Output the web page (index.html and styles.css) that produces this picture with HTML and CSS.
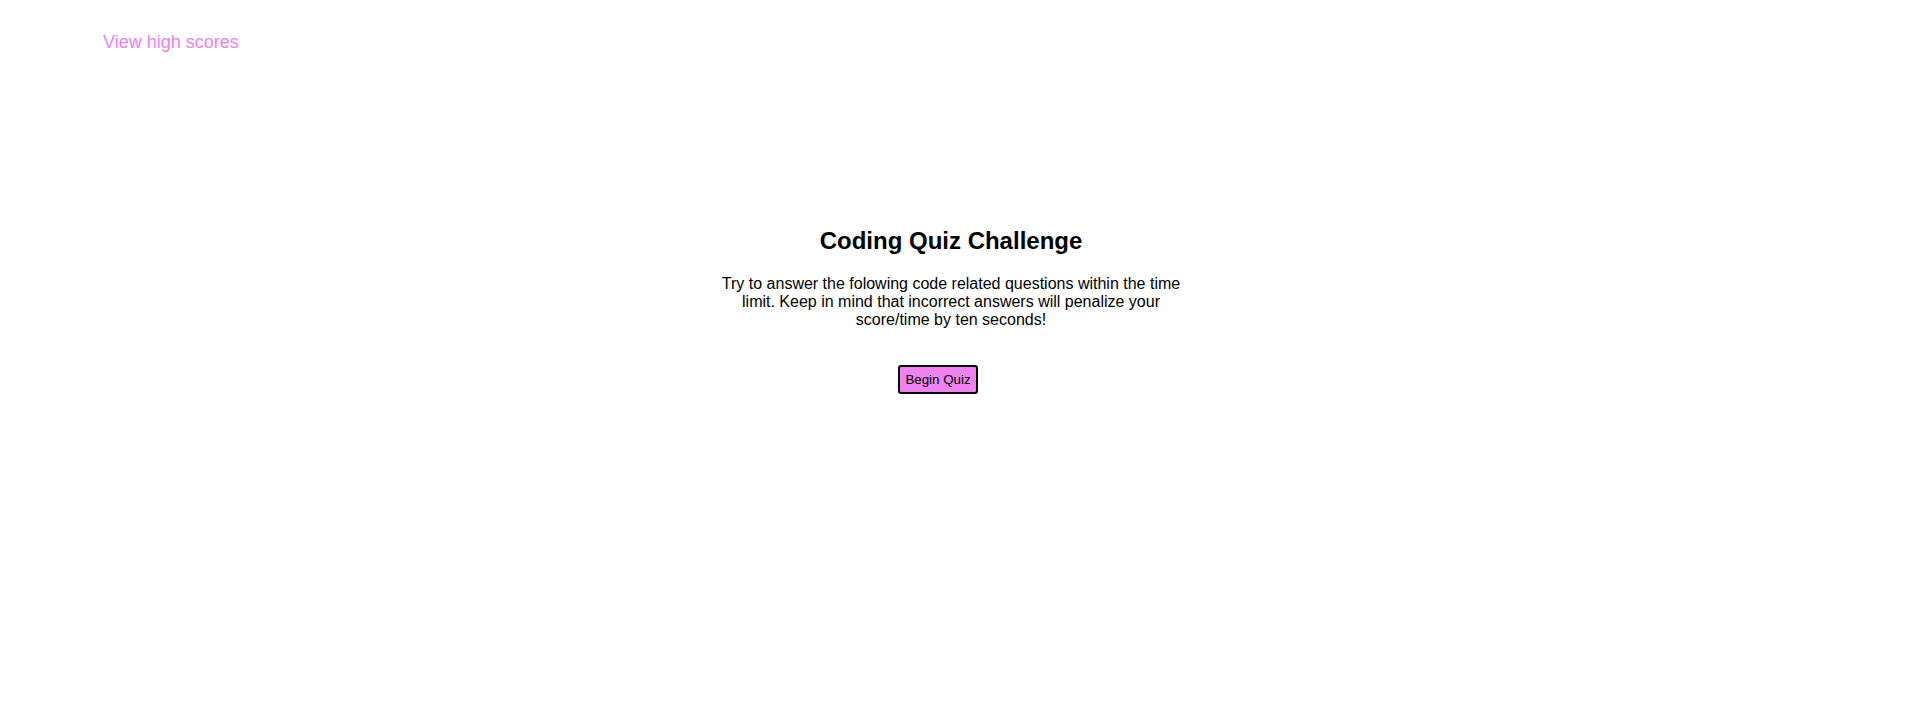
FILE: index.html
```html
<!DOCTYPE html>
<html lang="en">
<head>
<meta charset="utf-8">
<title>Coding Quiz</title>
<link rel="stylesheet" href="styles.css">
</head>
<body>
<header class="top">
  <a class="scores-link" href="#">View high scores</a>
</header>
<main class="intro">
  <h2 class="title">Coding Quiz Challenge</h2>
  <p class="desc">Try to answer the folowing code related questions within the time limit. Keep in mind that incorrect answers will penalize your score/time by ten seconds!</p>
  <div class="actions"><button class="begin">Begin Quiz</button></div>
</main>
</body>
</html>
```
FILE: styles.css
```css
html, body {
  margin: 0;
  padding: 0;
  background: #fff;
  font-family: "Liberation Sans", Arial, sans-serif;
  color: #000;
}
.top {
  padding: 32px 0 0 103px;
  height: 21px;
}
.scores-link {
  color: #ee82ee;
  text-decoration: none;
  font-size: 18px;
  line-height: 21px;
}
.intro {
  width: 470px;
  margin: 174px 0 0 calc(50% - 244px);
  text-align: center;
}
.title {
  font-size: 24px;
  font-weight: bold;
  line-height: 28px;
  margin: 0 0 20px;
}
.desc {
  font-size: 16px;
  line-height: 18px;
  margin: 0;
}
.actions {
  margin-top: 36px;
  padding-left: 182px;
  text-align: left;
}
.begin {
  width: 80px;
  height: 29px;
  background: #ee82ee;
  border: 2px solid #000;
  border-radius: 3px;
  font-family: "Liberation Sans", Arial, sans-serif;
  font-size: 13.33px;
  color: #000;
  padding: 0;
}
```
